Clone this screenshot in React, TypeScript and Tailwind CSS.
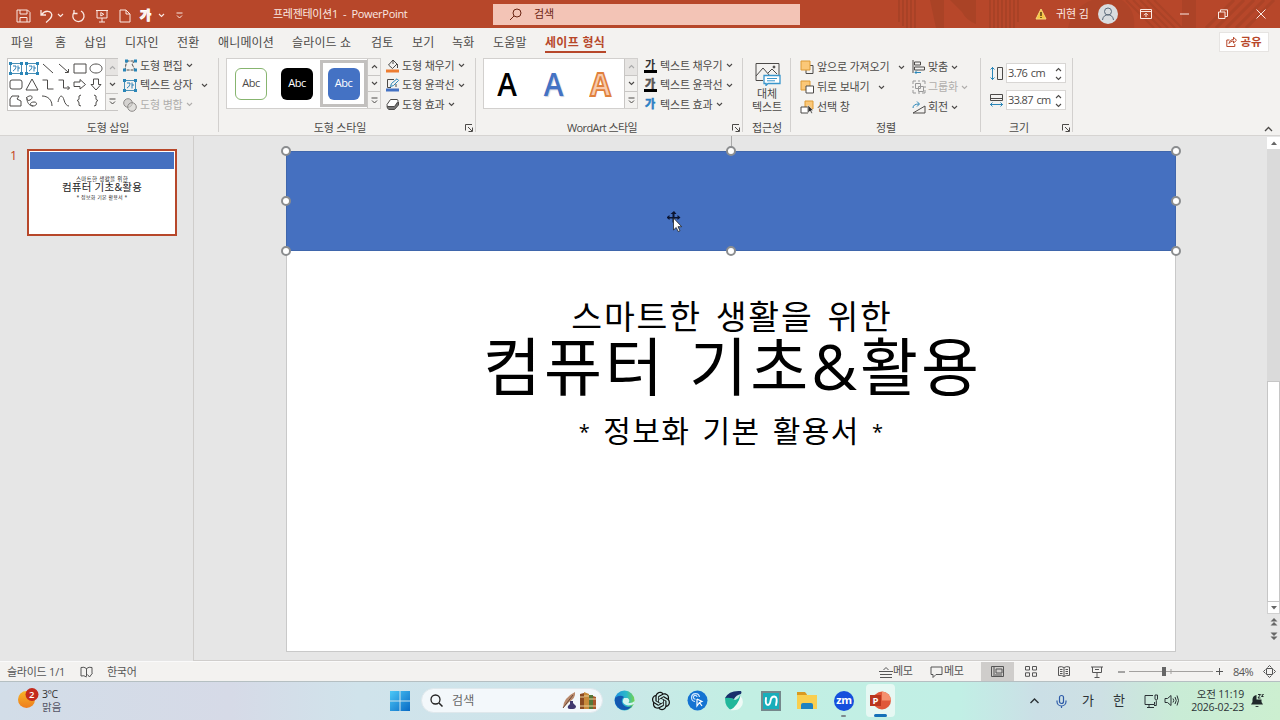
import type { ReactNode } from "react";
import { RiOpenaiFill } from "react-icons/ri";

const TABS = [
  { name: "파일", width: "w-[44px]" },
  { name: "홈", width: "w-[29px]" },
  { name: "삽입", width: "w-[41px]" },
  { name: "디자인", width: "w-[52px]" },
  { name: "전환", width: "w-[41px]" },
  { name: "애니메이션", width: "w-[74px]" },
  { name: "슬라이드 쇼", width: "w-[79px]" },
  { name: "검토", width: "w-[41px]" },
  { name: "보기", width: "w-[40px]" },
  { name: "녹화", width: "w-[41px]" },
  { name: "도움말", width: "w-[52px]" },
];

type IconProps = {
  w: number;
  h: number;
  children: ReactNode;
  className?: string;
};

function Icon({ w, h, children, className = "" }: IconProps) {
  return (
    <svg
      width={w}
      height={h}
      viewBox={`0 0 ${w} ${h}`}
      fill="none"
      stroke="currentColor"
      strokeWidth={1}
      className={`block shrink-0 ${className}`}
    >
      {children}
    </svg>
  );
}

function Chevron({ up = false, className = "" }: { up?: boolean; className?: string }) {
  return (
    <Icon w={7} h={5} className={className}>
      <path d={up ? "M1 4l2.500-2.500L6 4" : "M1 1l2.500 2.500L6 1"} strokeWidth={1.1} />
    </Icon>
  );
}

/* ---------- title bar ---------- */

function TitleBar() {
  return (
    <header className="relative flex h-[28px] items-center bg-[#b7472a] text-[11px] text-[#fbe9e3]">
      <svg className="absolute top-0 left-[890px]" width="390" height="28" fill="none" stroke="#a54126">
        <path d="M9 0v22M13 0v26M17 0v28M21 0v28M25 0v28" strokeWidth="1.6" />
        <path d="M40 0h14v28h-8zM60 0h26v24q-10-4-14-12z" fill="#a54126" stroke="none" opacity=".75" />
        <path d="M100 0v28M104 0v28M108 0v28M112 0v28M116 0v28M120 0v28M124 0v28M128 0v22" strokeWidth="1.6" />
        <path d="M178 28q4-20 24-28h30q14 10 12 28z" fill="#a54126" stroke="none" opacity=".45" />
        <path d="M236 0l28 28M243 0l28 28M250 0l28 28M257 0l28 28M264 0l28 28" strokeWidth="2" opacity=".7" />
        <path d="M292 0h14v28h-14z" fill="#a54126" stroke="none" opacity=".6" />
        <path d="M316 28l28-28M326 28l28-28M336 28l28-28M346 28l28-28M356 28l28-28" strokeWidth="3" opacity=".7" />
      </svg>
      <div className="relative flex h-full w-full items-center">
        <div className="flex w-[273px] items-center pt-[3px] pl-[16px]">
          <Icon w={15} h={14}>
            <path d="M1 1h10.500L14 3.500V13H1z M4 1v4h7V1 M4 13V8.500h7V13" />
          </Icon>
          <Icon w={15} h={14} className="ml-[9px]">
            <path d="M1 1v5h5M1.300 5.800C5 .8 11 1.500 11.700 5.500c.6 3-2 5-5.700 8" strokeWidth={1.3} />
          </Icon>
          <Chevron className="ml-[2px]" />
          <Icon w={15} h={14} className="ml-[7px]">
            <path d="M3 1v3.500h3.500M3 3.500a5.600 5.600 0 1 0 7-1.500" strokeWidth={1.3} />
          </Icon>
          <Icon w={14} h={14} className="ml-[9px]">
            <path d="M1 1.500h12M2 1.500v7.500h10v-7.500M7 9v4M4 13h6M5.800 3.500v3.500l3-1.700z" />
          </Icon>
          <Icon w={12} h={14} className="ml-[10px]">
            <path d="M1 1h6l4 4v8H1zM7 1v4h4" />
          </Icon>
          <span className="ml-[9px] w-[14px] text-[12px] leading-[14px] font-black [-webkit-text-stroke:1px_#fff]">가</span>
          <Chevron className="ml-[4px]" />
          <Icon w={7} h={7} className="ml-[11px]">
            <path d="M.5 1h6M1 3.500l2.500 2.500L6 3.500" />
          </Icon>
        </div>
        <div className="w-[220px] tracking-[-0.3px] whitespace-pre">프레젠테이션1  -  PowerPoint</div>
        <div className="flex h-[21px] w-[307px] items-center bg-[#f3c4b6] pl-[16px] text-[#6b2413]">
          <Icon w={13} h={13}>
            <circle cx="8" cy="5" r="4" />
            <path d="M5 8L1 12" />
          </Icon>
          <span className="ml-[12px] text-[11px]">검색</span>
        </div>
        <Icon w={12} h={12} className="ml-[235px]">
          <path d="M6 1l5 10H1z" fill="#f5c542" stroke="#f5d77a" />
          <path d="M6 4v4M6 9v1" stroke="#40280a" strokeWidth={1.3} />
        </Icon>
        <span className="ml-[9px] w-[33px] tracking-[-0.1px] whitespace-nowrap">귀현 김</span>
        <Icon w={20} h={20} className="ml-[9px]">
          <circle cx="10" cy="10" r="10" fill="#d9dcdf" stroke="none" />
          <circle cx="10" cy="7.500" r="3.500" stroke="#5b6a7a" />
          <path d="M4.500 16c.5-7 10.500-7 11 0" stroke="#5b6a7a" />
        </Icon>
        <Icon w={12} h={10} className="ml-[22px]">
          <path d="M.5.500h11v9H.500zM.5 2.500h11M6 8V4.500M4 6.200l2-2 2 2" />
        </Icon>
        <Icon w={9} h={2} className="ml-[28px]">
          <path d="M0 1h9" />
        </Icon>
        <Icon w={10} h={10} className="ml-[29px]">
          <path d="M.5 3h6.500v6.500H.500zM2.500 3V.8h7v6.700H7" />
        </Icon>
        <Icon w={10} h={10} className="ml-[28px]">
          <path d="M.5.500l9 9M9.500.500l-9 9" />
        </Icon>
      </div>
    </header>
  );
}

function TabStrip() {
  return (
    <nav className="flex h-[27px] items-center bg-[#f3f2f0] pl-[11px] text-[12px] text-[#4c4a48]">
      {TABS.map(({ name, width }) => (
        <span key={name} className={`${width} shrink-0 pt-[2px] leading-[18px] tracking-[0.15px] whitespace-nowrap`}>
          {name}
        </span>
      ))}
      <span className="flex h-[23px] w-[61px] shrink-0 items-center border-b-2 border-[#b7472a] pt-[4px] font-bold tracking-[0.3px] whitespace-nowrap text-[#b7472a]">
        세이프 형식
      </span>
      <button className="mr-[11px] ml-auto flex h-[20px] w-[50px] items-center justify-center gap-[3px] border border-[#e6e4e2] bg-white text-[11.500px] font-bold text-[#b7472a]">
        <Icon w={11} h={11}>
          <path d="M3.500 4H.800v6.500h8V8M3 7.500c.5-3 2.500-4 4.500-4V1.200L10.500 4.300 7.500 7V5C5.500 5 4 6 3 7.500z" />
        </Icon>
        공유
      </button>
    </nav>
  );
}

/* ---------- ribbon ---------- */

type GroupProps = {
  label: string;
  className: string;
  labelClass?: string;
  launcher?: boolean;
  children: ReactNode;
};

function Group({ label, className, labelClass = "", launcher, children }: GroupProps) {
  return (
    <section className={`relative flex h-[80px] shrink-0 flex-col ${className}`}>
      <div className="flex h-[64px] items-start">{children}</div>
      <div className={`h-[16px] pt-px text-center leading-[16px] whitespace-nowrap ${labelClass}`}>{label}</div>
      {launcher && (
        <Icon w={8} h={8} className="absolute right-[3px] bottom-[3px]">
          <path d="M.5 6.500V.5H7M3 3l4 4M7.500 3.500v4h-4" />
        </Icon>
      )}
      <i className="absolute top-[3px] right-0 h-[74px] w-px bg-[#d2d0ce]" />
    </section>
  );
}

function GalleryArrows({ upDisabled }: { upDisabled?: boolean }) {
  return (
    <div className="flex h-full w-[13px] shrink-0 flex-col divide-y divide-[#c8c6c4] border-l border-[#c8c6c4] bg-[#f3f2f0]">
      <span className={`flex flex-1 items-center justify-center ${upDisabled ? "bg-[#e6e4e2] text-[#aaa]" : ""}`}>
        <Chevron up />
      </span>
      <span className="flex flex-1 items-center justify-center">
        <Chevron />
      </span>
      <span className="flex flex-1 items-center justify-center">
        <Icon w={7} h={7}>
          <path d="M.5 1h6M1 3.500L3.500 6 6 3.500" />
        </Icon>
      </span>
    </div>
  );
}

function Command({
  icon,
  text,
  gap = "ml-[6px]",
  iconWidth = "w-[16px]",
  disabled,
  arrow = true,
}: {
  icon: ReactNode;
  text: string;
  gap?: string;
  iconWidth?: string;
  disabled?: boolean;
  arrow?: boolean;
}) {
  return (
    <div className={`flex items-center whitespace-nowrap ${disabled ? "text-[#b0aeac]" : ""}`}>
      <span className={`${iconWidth} shrink-0`}>{icon}</span>
      <span className="leading-[16px]">{text}</span>
      {arrow && <Chevron className={gap} />}
    </div>
  );
}

const CORNERS = "M0 0h3v3h-3zM11 0h3v3h-3zM0 10h3v3h-3zM11 10h3v3h-3z";

function TextBoxIcon() {
  return (
    <Icon w={14} h={13} className="text-[#555]">
      <path d="M1.500 1.500h11v10h-11z" stroke="#4a8fb5" />
      <path d={CORNERS} fill="#2a86b8" stroke="none" />
      <path d="M4 4h3c0 2-1 4-3 5M9 3.500v6M9 6h2" stroke="#2a7fb5" />
    </Icon>
  );
}

const SHAPES = [
  "M2 2l10 9",
  "M2 2l9 8M8 10.500h3.500V7",
  "M1 2h12v9H1z",
  "M7 2c8 0 8 9 0 9s-8-9 0-9z",
  "M3 2h8q2 0 2 2v5q0 2-2 2H3q-2 0-2-2V4q0-2 2-2z",
  "M7 1l6 11H1z",
  "M1.500 2h5v9h6",
  "M1.500 2h5v8h6M10.500 8l2 2-2 2",
  "M1 4h6V1.500L12.500 6.500 7 11V8.500H1z",
  "M4.500 1h5v5.500H12L7 12 2 6.500h2.500z",
  "M3 2h7l-2 3 4 2v5H1V5z",
  "M1 4c6-5 8 0 4 2s-3-4-3-1 2 7 6 7 5-4 1-4-5 3-1 4",
  "M1 2c6 0 10 4 10 10",
  "M1 8c2-9 5-6 6-2s3 6 5 6",
  "M8 1q-3 0-2 4 0 1-2 1.500Q6 7 6 9q-1 3 2 3",
  "M5 1q3 0 2 4 0 1 2 1.500Q7 7 7 9q1 3-2 3",
];

function ShapeInsertGroup() {
  return (
    <Group label="도형 삽입" className="w-[219px]" labelClass="w-[216px]">
      <div className="mt-[3px] ml-[7px] flex h-[53px] w-[111px] border border-[#c8c6c4] bg-white">
        <div className="grid flex-1 grid-cols-[repeat(6,16px)] content-start pt-[1px] pl-[1px]">
          <span className="flex h-[16px] items-center"><TextBoxIcon /></span>
          <span className="flex h-[16px] items-center"><TextBoxIcon /></span>
          {SHAPES.map((d) => (
            <span key={d} className="flex h-[16px] items-center">
              <Icon w={14} h={13}>
                <path d={d} />
              </Icon>
            </span>
          ))}
        </div>
        <GalleryArrows upDisabled />
      </div>
      <div className="mt-[1px] ml-[5px] flex flex-col">
        <div className="flex h-[19px] items-center">
          <Command
            iconWidth="w-[17px]"
            text="도형 편집"
            gap="ml-[3px]"
            icon={
              <Icon w={14} h={13}>
                <path d="M3.500 2h8L9 5l3 6H2z" strokeDasharray="3 1" />
                <path d="M2 .5h3v3h-3zM11 .5h3v3h-3zM0 9.500h3v3h-3zM11 9.500h3v3h-3z" fill="#2a86b8" stroke="none" />
              </Icon>
            }
          />
        </div>
        <div className="flex h-[20px] items-center">
          <Command iconWidth="w-[17px]" text="텍스트 상자" gap="ml-[8px]" icon={<TextBoxIcon />} />
        </div>
        <div className="flex h-[19px] items-center">
          <Command
            iconWidth="w-[17px]"
            text="도형 병합"
            gap="ml-[3px]"
            disabled
            icon={
              <Icon w={14} h={14} className="text-[#8d8b89]">
                <circle cx="5" cy="5" r="4.300" fill="#d5d3d1" />
                <circle cx="9" cy="9" r="4.300" fill="#d5d3d1" fillOpacity=".6" />
              </Icon>
            }
          />
        </div>
      </div>
    </Group>
  );
}

function ShapeStyleGroup() {
  return (
    <Group label="도형 스타일" className="w-[257px]" labelClass="w-[242px]" launcher>
      <div className="mt-[3px] ml-[7px] flex h-[51px] w-[155px] border border-[#d2d0ce] bg-white text-[11px] tracking-[-0.5px]">
        <div className="flex flex-1 items-center">
          <span className="ml-[8px] flex h-[32px] w-[32px] items-center justify-center rounded-[6px] border border-[#87b56f]">Abc</span>
          <span className="ml-[14px] flex h-[32px] w-[32px] items-center justify-center rounded-[6px] bg-black text-white">Abc</span>
          <span className="ml-[7px] flex h-[47px] w-[47px] items-center justify-center border-[3px] border-[#c2c0be] bg-white">
            <span className="flex h-[32px] w-[32px] items-center justify-center rounded-[6px] bg-[#4472c4] text-white">Abc</span>
          </span>
        </div>
        <GalleryArrows />
      </div>
      <div className="mt-px ml-[5px] flex flex-col">
        <div className="flex h-[19px] items-center">
          <Command
            text="도형 채우기"
            gap="ml-[3px]"
            icon={
              <Icon w={14} h={14}>
                <path d="M7 1L2.500 6l4 3.500L11 5zM7 1v4M11.500 5v4" />
                <path d="M0 10.500h13v3H0z" fill="#ed7d31" stroke="none" />
              </Icon>
            }
          />
        </div>
        <div className="flex h-[20px] items-center">
          <Command
            text="도형 윤곽선"
            gap="ml-[3px]"
            icon={
              <Icon w={14} h={14}>
                <path d="M8 1.500H1.500V9.500H5M10 9V6" />
                <path d="M4.500 8.500l1-3L11 .8l1.600 1.600L7.500 7.500z" stroke="#2a86b8" />
                <path d="M0 10.500h13v3H0z" fill="#4472c4" stroke="none" />
              </Icon>
            }
          />
        </div>
        <div className="flex h-[19px] items-center">
          <Command
            text="도형 효과"
            gap="ml-[3px]"
            icon={
              <Icon w={14} h={13}>
                <path d="M1 8q0 3 2 3.500h5.500l4-4.500V4L8 8.500z" fill="#777" />
                <path d="M4.500 1.500h6.500q1.500.5 1 2L8.500 8.500H2q-1.500-.5-1-2z" fill="#fff" />
              </Icon>
            }
          />
        </div>
      </div>
    </Group>
  );
}

function LetterIcon({ color, bar, outlined }: { color: string; bar?: boolean; outlined?: boolean }) {
  return (
    <span className="flex h-[14px] w-[14px] flex-col items-center">
      <span
        className={`text-[11px] leading-[11px] ${color} ${outlined ? "font-bold [-webkit-text-stroke:0.6px_currentColor]" : "font-semibold"}`}
      >
        가
      </span>
      {bar && <i className="block h-[3px] w-[13px] shrink-0 bg-black" />}
    </span>
  );
}

function WordArtGroup() {
  return (
    <Group label="WordArt 스타일" className="w-[267px]" labelClass="w-[252px] tracking-[-0.6px]" launcher>
      <div className="mt-[3px] ml-[7px] flex h-[51px] w-[155px] border border-[#d2d0ce] bg-white">
        <div className="flex flex-1 items-center text-[33px] leading-none font-semibold">
          <span className="w-[46px] scale-x-90 text-center text-black">A</span>
          <span className="w-[47px] scale-x-90 text-center text-[#4472c4] [text-shadow:1px_1px_1px_#c8cede]">A</span>
          <span className="w-[47px] scale-x-90 text-center font-bold text-[#f8cbad] [-webkit-text-stroke:1.800px_#e0803c]">A</span>
        </div>
        <GalleryArrows upDisabled />
      </div>
      <div className="mt-px ml-[5px] flex flex-col">
        <div className="flex h-[19px] items-center">
          <Command iconWidth="w-[17px]" text="텍스트 채우기" gap="ml-[3px]" icon={<LetterIcon color="text-[#333]" bar />} />
        </div>
        <div className="flex h-[20px] items-center">
          <Command iconWidth="w-[17px]" text="텍스트 윤곽선" gap="ml-[3px]" icon={<LetterIcon color="text-[#555]" bar outlined />} />
        </div>
        <div className="flex h-[19px] items-center">
          <Command iconWidth="w-[17px]" text="텍스트 효과" gap="ml-[3px]" icon={<LetterIcon color="text-[#2a7fc4]" outlined />} />
        </div>
      </div>
    </Group>
  );
}

function AltTextGroup() {
  return (
    <Group label="접근성" className="w-[48px]">
      <div className="mt-[7px] flex w-full flex-col items-center">
        <Icon w={27} h={24}>
          <path d="M9 18.500H2V1.500h23V13" />
          <path d="M2 14l7-8 7 8M14 11l4-4 5 5" />
          <circle cx="20" cy="5" r="1" fill="#444" />
          <path d="M10 13.500h16v8H14l-2 2v-2h-2z" fill="#fff" stroke="#3a96cc" strokeWidth={1.3} />
          <path d="M13 16.500h10M13 18.800h8" stroke="#3a96cc" />
        </Icon>
        <span className="pt-px leading-[13px]">대체</span>
        <span className="leading-[13px] whitespace-nowrap">텍스트</span>
      </div>
    </Group>
  );
}

function ArrangeGroup() {
  return (
    <Group label="정렬" className="w-[190px]">
      <div className="mt-[2px] ml-[9px] flex w-[112px] flex-col">
        <div className="flex h-[20px] items-center">
          <Command
            iconWidth="w-[17px]"
            text="앞으로 가져오기"
            gap="ml-[8px]"
            icon={
              <Icon w={14} h={14}>
                <path d="M8 5.500h5v8H6V9" />
                <path d="M1 1h9v9H1z" fill="#fbc878" stroke="#dd9a35" />
              </Icon>
            }
          />
        </div>
        <div className="flex h-[20px] items-center">
          <Command
            iconWidth="w-[17px]"
            text="뒤로 보내기"
            gap="ml-[8px]"
            icon={
              <Icon w={14} h={14}>
                <path d="M1 1h9v9H1z" fill="#fbc878" stroke="#dd9a35" />
                <path d="M6 6h7.500v7H6z" fill="#fff" />
              </Icon>
            }
          />
        </div>
        <div className="flex h-[20px] items-center">
          <Command
            iconWidth="w-[17px]"
            text="선택 창"
            arrow={false}
            icon={
              <Icon w={14} h={14}>
                <path d="M5 1h8v8H5z" fill="#fbc878" stroke="#dd9a35" />
                <path d="M1 7h7v6H1z" fill="#fff" />
                <path d="M8 5v8l2-2 1.500 2.500 1-.6L11.300 10.500h2z" fill="#333" stroke="#fff" strokeWidth=".5" />
              </Icon>
            }
          />
        </div>
      </div>
      <div className="mt-[2px] flex flex-col">
        <div className="flex h-[20px] items-center">
          <Command
            text="맞춤"
            gap="ml-[3px]"
            icon={
              <Icon w={14} h={14}>
                <path d="M1 0v13M2.500 2h6v3h-6zM2.500 7h10v3h-10z" />
                <path d="M9 12.500H3M5 10.500l-2 2 2 2" stroke="#2a86b8" />
              </Icon>
            }
          />
        </div>
        <div className="flex h-[20px] items-center">
          <Command
            text="그룹화"
            gap="ml-[3px]"
            disabled
            icon={
              <Icon w={14} h={14} className="text-[#999]">
                <path d="M3.500 3.500h5v5h-5zM6.500 6.500h5v5h-5z" />
                <path d="M1 4V1h3M10 1h3v3M13 10v3h-3M4 13H1v-3M6 1h2M6 13h2M1 6v2M13 6v2" />
              </Icon>
            }
          />
        </div>
        <div className="flex h-[20px] items-center">
          <Command
            text="회전"
            gap="ml-[3px]"
            icon={
              <Icon w={14} h={13}>
                <path d="M1 12h12V5z" />
                <path d="M1 7q0-4 6-4M5 .500L7.500 3 5 5.500" stroke="#2a86b8" />
              </Icon>
            }
          />
        </div>
      </div>
    </Group>
  );
}

function SizeInput({ icon, value }: { icon: ReactNode; value: string }) {
  return (
    <div className="flex items-center">
      <span className="w-[17px]">{icon}</span>
      <div className="flex h-[20px] w-[60px] items-center border border-[#d8d6d4] bg-white pt-px pl-[1px]">
        <span className="flex-1 tracking-[-0.65px] [word-spacing:1.500px] whitespace-nowrap">{value}</span>
        <span className="flex w-[10px] flex-col gap-[4px]">
          <Chevron up />
          <Chevron />
        </span>
      </div>
    </div>
  );
}

function SizeGroup() {
  return (
    <Group label="크기" className="w-[92px]" labelClass="w-[76px]" launcher>
      <div className="mt-[8px] ml-[8px] flex flex-col gap-[7px]">
        <SizeInput
          value="3.76 cm"
          icon={
            <Icon w={15} h={15}>
              <path d="M8.500 1.500h5v12h-5z" />
              <path d="M3.500 1v13M1.500 3.500l2-2 2 2M1.500 11.500l2 2 2-2" stroke="#2a86b8" />
            </Icon>
          }
        />
        <SizeInput
          value="33.87 cm"
          icon={
            <Icon w={15} h={15}>
              <path d="M1.500 7.500V1.500h12v6zM1.500 5.500h12" />
              <path d="M1 11.500h13M3.500 9.500l-2 2 2 2M11.500 9.500l2 2-2 2" stroke="#2a86b8" />
            </Icon>
          }
        />
      </div>
    </Group>
  );
}

function Ribbon() {
  return (
    <div className="flex h-[81px] border-b border-[#d6d4d2] bg-[#f3f2f0] text-[11px] tracking-[-0.15px] text-[#4c4a48]">
      <ShapeInsertGroup />
      <ShapeStyleGroup />
      <WordArtGroup />
      <AltTextGroup />
      <ArrangeGroup />
      <SizeGroup />
      <div className="flex flex-1 items-end justify-end pr-[7px] pb-[3px]">
        <Icon w={9} h={6}>
          <path d="M1 5l3.500-3.500L8 5" strokeWidth={1.3} />
        </Icon>
      </div>
    </div>
  );
}

/* ---------- editor ---------- */

function Thumbnails() {
  return (
    <aside className="flex w-[194px] shrink-0 items-start border-r border-[#cfcdcb] pt-[13px] pl-[10px]">
      <span className="w-[17px] text-[12.500px] leading-[14px] text-[#c43e1c]">1</span>
      <div className="h-[87px] w-[150px] border-2 border-[#b7472a] bg-white p-px">
        <div className="h-[17px] bg-[#4570c0]" />
        <div className="flex flex-col items-center whitespace-nowrap text-[#222]">
          <span className="mt-[7px] text-[5.500px] leading-[7px] tracking-[0.35px]">스마트한 생활을 위한</span>
          <span className="text-[10.500px] leading-[9px] tracking-[0.25px]">컴퓨터 기초&amp;활용</span>
          <span className="mt-[2px] text-[5px] leading-[6px] tracking-[0.25px]">* 정보화 기본 활용서 *</span>
        </div>
      </div>
    </aside>
  );
}

const HANDLES = [
  "top-[-6px] left-[-6px]",
  "top-[-6px] left-[439px]",
  "top-[-6px] left-[884px]",
  "top-[44px] left-[-6px]",
  "top-[44px] left-[884px]",
  "top-[94px] left-[-6px]",
  "top-[94px] left-[439px]",
  "top-[94px] left-[884px]",
];

function Slide() {
  return (
    <div className="mt-[15px] ml-[92px] h-[501px] w-[890px] border border-t-0 border-[#c9c9c9] bg-white">
      <div className="relative ml-[-1px] h-[100px] w-[890px] border border-[#3f66ac] bg-[#4570c0]">
        <i className="absolute top-[-16px] left-[444px] h-[12px] w-px bg-[#a9a9a9]" />
        {HANDLES.map((pos) => (
          <i key={pos} className={`absolute h-[10px] w-[10px] rounded-full border-2 border-[#8b8d8f] bg-white ${pos}`} />
        ))}
        <svg className="absolute top-[59px] left-[380px]" width="16" height="22">
          <path d="M7 0l2.500 3h-2v3h3V4l3 2.500-3 2.500V7.500h-3v4h-2v-4h-3V9l-3-2.500 3-2.500v2h3V3h-2z" fill="#0b1430" />
          <path d="M6.500 7v12l2.700-2.500 2 4 1.800-.8-2-4h3.700z" fill="#fff" stroke="#222" strokeWidth=".8" />
        </svg>
      </div>
      <div className="flex flex-col items-center whitespace-nowrap text-black">
        <p className="mt-[44px] pl-[2px] text-[33.500px] leading-[42px] tracking-[1.900px] [word-spacing:3px]">스마트한 생활을 위한</p>
        <p className="pl-[3px] text-[63px] leading-[57px] tracking-[3px] [word-spacing:4px]">컴퓨터 기초&amp;활용</p>
        <p className="mt-[18px] pl-[1px] text-[30px] leading-[38px] tracking-[1.400px] [word-spacing:3px]">
          <span className="align-[3px] text-[20px] leading-none">*</span> 정보화 기본 활용서{" "}
          <span className="align-[3px] text-[20px] leading-none">*</span>
        </p>
      </div>
    </div>
  );
}

function ScrollBar() {
  return (
    <div className="mt-px ml-auto flex w-[13px] flex-col items-center text-[#666]">
      <span className="flex h-[12px] w-full items-center justify-center bg-white">
        <Icon w={6} h={4}><path d="M0 4l3-3.500L6 4z" fill="currentColor" stroke="none" /></Icon>
      </span>
      <span className="h-[232px] w-full bg-[#dadada]" />
      <span className="h-[221px] w-full border border-[#c6c6c6] bg-white" />
      <span className="flex h-[12px] w-full items-center justify-center border border-t-0 border-[#d0d0d0] bg-white">
        <Icon w={6} h={4}><path d="M0 0l3 3.500L6 0z" fill="currentColor" stroke="none" /></Icon>
      </span>
      <Icon w={8} h={8} className="mt-[4px]">
        <path d="M4 0l3.500 3.500h-7zM4 4l3.500 3.500h-7z" fill="currentColor" stroke="none" />
      </Icon>
      <Icon w={8} h={8} className="mt-[6px]">
        <path d="M4 4L.5.500h7zM4 8L.5 4.500h7z" fill="currentColor" stroke="none" />
      </Icon>
    </div>
  );
}

function StatusBar() {
  return (
    <footer className="flex h-[20px] shrink-0 items-center border-t border-[#fafafa] bg-[#f3f2f0] text-[11px] tracking-[-0.25px] whitespace-nowrap text-[#555]">
      <span className="w-[73px] pt-px pl-[7px]">슬라이드 1/1</span>
      <Icon w={13} h={12} className="ml-[7px]">
        <path d="M6.500 2.500Q4 .500 1 1.500v8.500q3-1 5.500 1M6.500 2.500Q9 .500 12 1.500V7M6.500 2.500v8M7.500 8.500l2 2.500 3-4" />
      </Icon>
      <span className="ml-[14px] pt-px">한국어</span>
      <div className="ml-auto flex h-full items-center">
        <Icon w={14} h={12}>
          <path d="M4.500 4L7 1.500 9.500 4M0 5.500h14M1 8.500h12M1 11.500h12" />
        </Icon>
        <span className="w-[37px]">메모</span>
        <Icon w={14} h={12}>
          <path d="M1 1h11v7.500H6l-3 3v-3H1z" />
        </Icon>
        <span className="w-[37px]">메모</span>
        <span className="flex h-full w-[33px] items-center justify-center bg-[#cfcdcb]">
          <Icon w={13} h={11}>
            <path d="M.500.500h12v10H.500zM3 .500v10M5 3h6v4H5zM4 9h7" />
          </Icon>
        </span>
        <span className="flex w-[33px] justify-center">
          <Icon w={12} h={11}>
            <path d="M.500.500h4v3.500h-4zM7.500.500h4v3.500h-4zM.500 6.800h4v3.500h-4zM7.500 6.800h4v3.500h-4z" />
          </Icon>
        </span>
        <span className="flex w-[33px] justify-center">
          <Icon w={12} h={11}>
            <path d="M6 1.500Q3.500 0 .500 1v8.500q3-.8 5.500 1 2.500-1.800 5.500-1V1Q8.500 0 6 1.500v9M2 3.500h2.500M2 5.500h2.500M2 7.500h2.500M7.500 3.500H10M7.500 5.500H10M7.500 7.500H10" />
          </Icon>
        </span>
        <span className="flex w-[33px] justify-center">
          <Icon w={12} h={12}>
            <path d="M0 1h12M1.500 1v5.500h9V1M6 6.500v5M3.500 11.500h5M4 3.500h4" />
          </Icon>
        </span>
        <Icon w={7} h={2} className="ml-[5px]"><path d="M0 1h7" /></Icon>
        <Icon w={84} h={11} className="ml-[4px]">
          <path d="M0 5.500h84" stroke="#a3a19f" />
          <path d="M42 3v5" stroke="#a3a19f" />
          <path d="M33 1h4v9h-4z" fill="#666" stroke="none" />
        </Icon>
        <Icon w={7} h={7} className="ml-[3px]"><path d="M0 3.500h7M3.500 0v7" /></Icon>
        <span className="ml-[10px] w-[30px] pt-px tracking-[-0.5px]">84%</span>
        <Icon w={13} h={13} className="mr-[4px]">
          <path d="M3.500 3.500h6v6h-6zM4.500 2.500l2-2 2 2M4.500 10.500l2 2 2-2M2.500 4.500l-2 2 2 2M10.500 4.500l2 2-2 2" />
        </Icon>
      </div>
    </footer>
  );
}

/* ---------- windows taskbar ---------- */

function Cell({ children }: { children: ReactNode }) {
  return <span className="flex w-[36.600px] shrink-0 items-center justify-center">{children}</span>;
}

function TaskApps() {
  return (
    <div className="ml-[3px] flex h-full items-center">
      <Cell>
        <svg width="21" height="21" viewBox="0 0 21 21">
          <defs>
            <linearGradient id="edge" x1="0" x2="1">
              <stop offset="0" stopColor="#1d8fe0" />
              <stop offset=".6" stopColor="#2cb9c8" />
              <stop offset="1" stopColor="#74d34c" />
            </linearGradient>
          </defs>
          <circle cx="10.500" cy="10.500" r="10" fill="url(#edge)" />
          <path d="M1 8q5-4 9-1-4 3-1 7.500 3 4 9 1.500Q13 22 6 19 0 15 1 8z" fill="#1458b0" />
          <path d="M10 8q-3 4 1 6.500 4 2 9-.5l.5-3q-2 2.500-6 2 2-3-1-5z" fill="#d3f4ef" />
        </svg>
      </Cell>
      <Cell><RiOpenaiFill size={22} color="#111" /></Cell>
      <Cell>
        <svg width="21" height="21" fill="none" stroke="#cfe6ff" strokeWidth="1.200">
          <circle cx="10.500" cy="10.500" r="10" fill="#1473d2" stroke="none" />
          <path d="M8 11.500a4 4 0 1 1 4.500-4.500M8.500 9a1.800 1.800 0 1 1 1.500-2" />
          <path d="M10 9l5 2.500-2.500 1 2.500 3.500M10 9v7l2.500-3.500" stroke="#fff" />
        </svg>
      </Cell>
      <Cell>
        <svg width="20" height="21">
          <path d="M1 8Q5 0 17 1q1 1 0 3-5 1-7 5z" fill="#17306b" />
          <path d="M1 8q7-1 10 2 4-1 5-5 3 5 0 10-3 5-8 5Q1 18 1 8z" fill="#22b79b" />
          <path d="M6 20q8-4 10.500-14.500Q21 12 17 17q-3 4-11 3z" fill="#eefaf6" />
        </svg>
      </Cell>
      <Cell>
        <svg width="20" height="20" fill="none">
          <path d="M0 0h20v20H0z" fill="#75888c" />
          <path d="M2 2h16v16H2z" fill="#19aebb" />
          <path d="M5 7q-1 7 2 7 2 0 2.500-4 .5-4.500 4-4.500 3.500.5 1.500 8.500" stroke="#fff" strokeWidth="1.900" strokeLinecap="round" />
        </svg>
      </Cell>
      <Cell>
        <svg width="20" height="19">
          <path d="M0 1h8l2 2.500V8H0z" fill="#d99a22" />
          <path d="M0 4h20v14H0z" fill="#f9cf4f" />
          <path d="M4 18v-4q0-2 2-2h8q2 0 2 2v4z" fill="#1d82c0" />
        </svg>
      </Cell>
      <Cell>
        <span className="relative flex h-[20px] w-[20px] items-center justify-center rounded-full bg-[#1550dc] text-[11px] leading-none font-bold tracking-[-0.5px] text-white">
          <span className="pb-[2px]">zm</span>
          <i className="absolute bottom-[-6px] h-[2px] w-[5px] rounded bg-[#7d8a8c]" />
        </span>
      </Cell>
      <Cell>
        <span className="relative flex h-[33px] w-[29px] items-center justify-center rounded-[4px] bg-[#e6f8f3]">
          <svg width="21" height="19">
            <circle cx="12" cy="9.500" r="9" fill="#e0583a" />
            <path d="M12 .5a9 9 0 0 1 9 9h-9z" fill="#f5916f" />
            <path d="M0 4h11v11H0z" fill="#b9361e" />
            <text x="2.500" y="13" fontSize="9.500" fontWeight="700" fill="#fff">P</text>
          </svg>
          <i className="absolute bottom-0 h-[3px] w-[13px] rounded bg-[#1470b8]" />
        </span>
      </Cell>
    </div>
  );
}

function Taskbar() {
  return (
    <div className="flex h-[39px] items-center border-t border-[#b5bfc2] bg-[linear-gradient(90deg,#d2dde8_0%,#d6dae7_18%,#d0e3eb_28%,#cde5ea_45%,#c2efe3_58%,#c1efe5_75%,#cbdfe6_81%,#cde0e4_86%,#c9ecd6_92%,#ccefd0_100%)] pb-px text-[11px] text-[#333]">
      <svg className="ml-[17px] shrink-0" width="24" height="26">
        <defs>
          <linearGradient id="sun" x1="0" y1="0" x2="0" y2="1">
            <stop offset="0" stopColor="#f7b427" />
            <stop offset="1" stopColor="#ee7d1c" />
          </linearGradient>
        </defs>
        <circle cx="9.500" cy="11.500" r="8.500" fill="url(#sun)" />
        <circle cx="15" cy="6.500" r="6.500" fill="#c42b1c" />
        <text x="12" y="10" fontSize="9.500" fontWeight="600" fill="#fff">2</text>
      </svg>
      <div className="ml-px w-[348px] text-[10.500px] leading-[13px]">
        <p className="tracking-[-0.5px]">3°C</p>
        <p className="text-[#556]">맑음</p>
      </div>
      <svg width="20" height="20" className="shrink-0">
        <defs>
          <linearGradient id="win" x1="0" y1="0" x2="1" y2="1">
            <stop offset="0" stopColor="#4cc8f7" />
            <stop offset="1" stopColor="#0869c4" />
          </linearGradient>
        </defs>
        <path d="M0 0h9.500v9.500H0zM10.500 0H20v9.500h-9.500zM0 10.500h9.500V20H0zM10.500 10.500H20V20h-9.500z" fill="url(#win)" />
      </svg>
      <div className="ml-[11px] flex h-[25px] w-[182px] shrink-0 items-center rounded-full border border-[#dfe8ec] bg-[#f3f8fb] pl-[8px]">
        <Icon w={13} h={13} className="text-[#222]">
          <circle cx="5.500" cy="5.500" r="4.500" strokeWidth={1.3} />
          <path d="M9 9l3.500 3.500" strokeWidth={1.5} />
        </Icon>
        <span className="ml-[9px] text-[12px] tracking-[0.3px] text-[#666]">검색</span>
        <svg width="35" height="19" className="mr-[5px] ml-auto">
          <path d="M1 17Q1 7 13 1q1 6-6 10z" fill="#b98a6c" />
          <path d="M1 17L11 4" stroke="#6d4a38" />
          <path d="M8 10h3v2l3 3q0 3-3 3H8q-3 0-2-3l2-2z" fill="#40386e" />
          <path d="M18 3l4-1v16h-4z" fill="#8c4b22" />
          <path d="M22 1l5 2v15h-5z" fill="#c98b3b" />
          <path d="M27 4h4v14h-4z" fill="#56773a" />
          <path d="M31 5l3 1v12h-3z" fill="#a8552a" />
          <path d="M18 6h4M22 5h5M27 8h4M31 8h3M18 15h16" stroke="#ead09a" />
        </svg>
      </div>
      <TaskApps />
      <div className="ml-auto flex items-center text-[#2b3236]">
        <Icon w={9} h={6}><path d="M.500 5L4.500 1l4 4" strokeWidth={1.4} /></Icon>
        <Icon w={11} h={14} className="ml-[17px] text-[#2c5aa8]">
          <path d="M3.500 3.500a2 2 0 0 1 4 0v4a2 2 0 0 1-4 0zM1 6.500v1a4.500 4.500 0 0 0 9 0v-1M5.500 12v2" strokeWidth={1.2} />
        </Icon>
        <span className="ml-[15px] w-[31px] text-[13px]">가</span>
        <span className="w-[31px] text-[13px]">한</span>
        <Icon w={14} h={14}>
          <path d="M9 1.500H1v9h9.500V8M3 13.500h7M5 10.500v3M11 1h2.500v4a1.300 1.300 0 0 1-2.500 0zM12.300 6.500v5H10" />
        </Icon>
        <Icon w={15} h={13} className="ml-[6px]">
          <path d="M1 4.500h2.500L7 1.500v10L3.500 8.500H1zM9 4.500q1.500 2 0 4M11 3q2.500 3.500 0 7M13 1.500q3 5 0 10" />
        </Icon>
        <div className="ml-[10px] w-[55px] text-right text-[10.500px] leading-[13px] tracking-[-0.2px] whitespace-nowrap">
          <p>오전 11:19</p>
          <p>2026-02-23</p>
        </div>
        <svg width="14" height="14" className="mr-[16px] ml-[6px]" fill="#20282a">
          <path d="M1 10.500L2.500 8V5q.5-3.500 4-4v4.500h5V8l1.500 2.500zM5 12h4q-2 2-4 0z" />
          <path d="M8 .5h2.500L8 4h2.500M11.500 0h2l-2 2.500h2" fill="none" stroke="#20282a" />
        </svg>
      </div>
    </div>
  );
}

export default function App() {
  return (
    <div
      lang="ko"
      className="flex h-[720px] w-[1280px] flex-col overflow-hidden bg-[#e6e6e6] font-['Open_Sans','Noto_Sans_CJK_KR',sans-serif]"
    >
      <TitleBar />
      <TabStrip />
      <Ribbon />
      <main className="flex h-[525px] shrink-0">
        <Thumbnails />
        <div className="flex flex-1 border-b border-[#d0cecc]">
          <Slide />
          <ScrollBar />
        </div>
      </main>
      <StatusBar />
      <Taskbar />
    </div>
  );
}
